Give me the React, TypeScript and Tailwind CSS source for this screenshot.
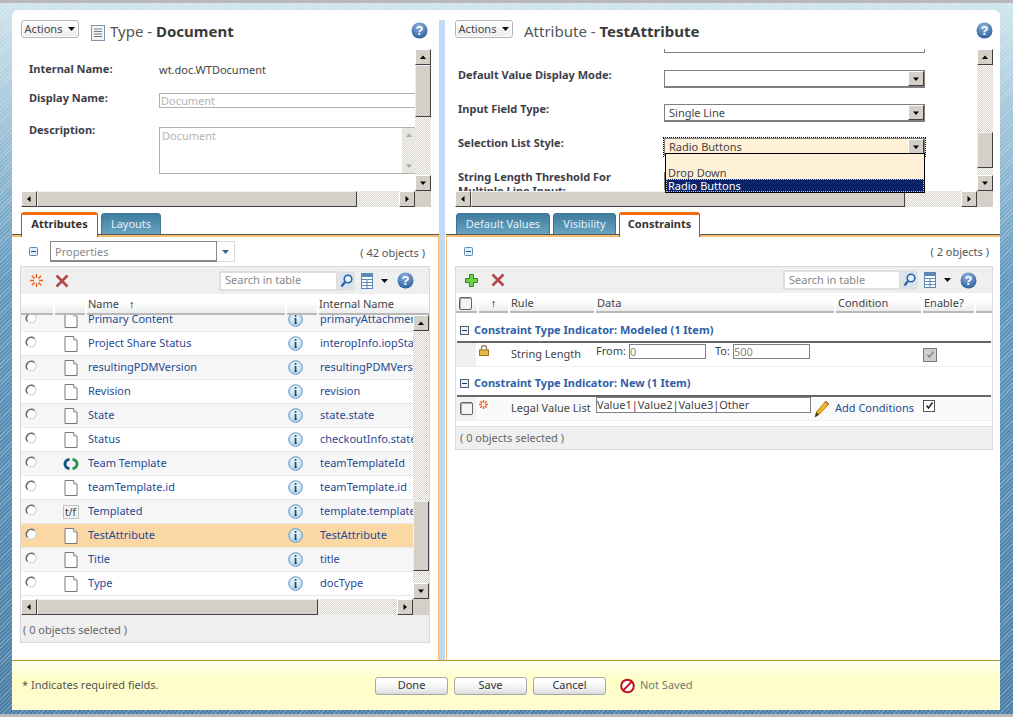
import React from "react";

const hatch =
  "bg-[repeating-conic-gradient(#d4d0c8_0_25%,#ffffff_0_50%)] bg-[length:2px_2px]";

function Arrow({ dir, faded }: { dir: "up" | "down" | "left" | "right"; faded?: boolean }) {
  const points = {
    up: "1,6 4,2.5 7,6",
    down: "1,2.5 4,6 7,2.5",
    left: "5.5,1 2,4 5.5,7",
    right: "2.5,1 6,4 2.5,7",
  }[dir];
  return (
    <svg width="8" height="8" viewBox="0 0 8 8">
      <polygon points={points} fill={faded ? "#a8a8a8" : "#000"} />
    </svg>
  );
}

function ScrollButton({ dir }: { dir: "up" | "down" | "left" | "right" }) {
  return (
    <div className="w-4 h-4 shrink-0 flex items-center justify-center bg-[#d4d0c8] border border-t-white border-l-white border-r-[#404040] border-b-[#404040]">
      <Arrow dir={dir} />
    </div>
  );
}

function Thumb({ className }: { className: string }) {
  return (
    <div className={`shrink-0 bg-[#d4d0c8] border border-t-[#efefef] border-l-[#efefef] border-r-[#404040] border-b-[#404040] ${className}`} />
  );
}

function VBar({ height, before, thumb }: { height: string; before: string; thumb: string }) {
  return (
    <div className={`w-4 shrink-0 flex flex-col ${height}`}>
      <ScrollButton dir="up" />
      <div className={`flex-1 flex flex-col ${hatch}`}>
        <div className={before} />
        <Thumb className={`w-4 ${thumb}`} />
      </div>
      <ScrollButton dir="down" />
    </div>
  );
}

function HBar({ width, thumb }: { width: string; thumb: string }) {
  return (
    <div className={`h-4 shrink-0 flex ${width}`}>
      <ScrollButton dir="left" />
      <div className={`flex-1 flex ${hatch}`}>
        <Thumb className={`h-4 ${thumb}`} />
      </div>
      <ScrollButton dir="right" />
    </div>
  );
}

function HelpIcon() {
  return (
    <svg width="17" height="17" viewBox="0 0 17 17">
      <defs>
        <radialGradient id="helpBall" cx="0.45" cy="0.25" r="0.85">
          <stop offset="0" stopColor="#8fb4dc" />
          <stop offset="1" stopColor="#1f5596" />
        </radialGradient>
      </defs>
      <circle cx="8.5" cy="8.5" r="8" fill="url(#helpBall)" />
      <text x="8.5" y="13" textAnchor="middle" fontSize="13" fontWeight="700" fill="#fff" fontFamily="Liberation Sans, sans-serif">?</text>
    </svg>
  );
}

function DocIcon() {
  return (
    <svg width="14" height="16" viewBox="0 0 14 16">
      <path d="M1 .5H9.5L13 4V15.5H1Z" fill="#fff" stroke="#77776f" />
      <path d="M9.5 .5V4H13" fill="#eee" stroke="#99998f" />
    </svg>
  );
}

function TypeDocIcon() {
  return (
    <svg width="14" height="16" viewBox="0 0 14 16">
      <rect x="0.5" y="0.5" width="13" height="15" fill="#f2f5fa" stroke="#7f93ad" />
      <path d="M3 4H11M3 6.5H11M3 9H11M3 11.5H11" stroke="#777" />
    </svg>
  );
}

function RadioIcon() {
  return (
    <svg width="12" height="12" viewBox="0 0 12 12">
      <circle cx="6" cy="6" r="5" fill="#fff" stroke="#ddd" strokeWidth="1.5" />
      <path d="M2.4 9.4A5 5 0 0 1 9.4 2.4" fill="none" stroke="#6f6f6f" strokeWidth="1.5" />
    </svg>
  );
}

function InfoIcon() {
  return (
    <svg width="15" height="15" viewBox="0 0 15 15">
      <defs>
        <radialGradient id="infoBall" cx="0.5" cy="0.4" r="0.6">
          <stop offset="0" stopColor="#ffffff" />
          <stop offset="1" stopColor="#a8d0ec" />
        </radialGradient>
      </defs>
      <circle cx="7.5" cy="7.5" r="6.8" fill="url(#infoBall)" stroke="#5f9cc4" />
      <text x="7.5" y="11.5" textAnchor="middle" fontSize="12" fontWeight="700" fill="#174a6e" fontFamily="Liberation Serif, serif">i</text>
    </svg>
  );
}

function TeamIcon() {
  return (
    <svg width="16" height="12" viewBox="0 0 16 12">
      <path d="M6.5 1.5A4.5 4.5 0 0 0 6.5 10.5" fill="none" stroke="#16557f" strokeWidth="3" />
      <path d="M9.5 1.5A4.5 4.5 0 0 1 9.5 10.5" fill="none" stroke="#1f9a4a" strokeWidth="3" />
    </svg>
  );
}

function TfIcon() {
  return (
    <div className="w-4 h-[14px] border border-[#c4c4c4] bg-[#f4f4ee] flex items-center justify-center text-[10px] leading-none text-[#333]">
      t/f
    </div>
  );
}

function SparkIcon({ small }: { small?: boolean }) {
  const size = small ? 9 : 13;
  return (
    <svg width={size} height={size} viewBox="0 0 13 13">
      <path
        d="M6.5 0V4M6.5 9V13M0 6.5H4M9 6.5H13M1.8 1.8L4.5 4.5M8.5 8.5L11.2 11.2M11.2 1.8L8.5 4.5M4.5 8.5L1.8 11.2"
        stroke="#ee5a18"
        strokeWidth={small ? 2 : 1.4}
      />
    </svg>
  );
}

function RemoveIcon() {
  return (
    <svg width="14" height="14" viewBox="0 0 14 14">
      <path d="M1.5 1.5L12.5 12.5M12.5 1.5L1.5 12.5" stroke="#b4474a" strokeWidth="2.6" />
    </svg>
  );
}

function PlusIcon() {
  return (
    <svg width="13" height="13" viewBox="0 0 13 13">
      <path d="M4.5 .5H8.5V4.5H12.5V8.5H8.5V12.5H4.5V8.5H.5V4.5H4.5Z" fill="#6fd04a" stroke="#2d8a22" />
    </svg>
  );
}

function MagnifierIcon() {
  return (
    <svg width="13" height="14" viewBox="0 0 13 14">
      <circle cx="8" cy="5" r="3.8" fill="#e8f1fb" stroke="#2a62a8" strokeWidth="1.6" />
      <path d="M5 8L1.5 12.5" stroke="#2a62a8" strokeWidth="2.2" />
    </svg>
  );
}

function ColumnsIcon() {
  return (
    <svg width="12" height="16" viewBox="0 0 12 16">
      <rect x="0.5" y="0.5" width="11" height="15" fill="#fff" stroke="#5d88b8" />
      <path d="M0 3.5H12M0 6.5H12M0 9.5H12M0 12.5H12M6 6.5V16" stroke="#5d88b8" />
      <rect x="1" y="1" width="10" height="2" fill="#5d88b8" />
    </svg>
  );
}

function Caret() {
  return (
    <svg width="7" height="4" viewBox="0 0 7 4">
      <polygon points="0,0 7,0 3.5,4" fill="#111" />
    </svg>
  );
}

function Collapse() {
  return (
    <svg width="9" height="9" viewBox="0 0 9 9">
      <rect x="0.5" y="0.5" width="8" height="8" rx="1" fill="#e4eef8" stroke="#5a8cb4" />
      <path d="M2 4.5H7" stroke="#234f78" />
    </svg>
  );
}

function GroupCollapse() {
  return (
    <svg width="9" height="9" viewBox="0 0 9 9">
      <rect x="0.5" y="0.5" width="8" height="8" fill="#eef2f6" stroke="#4a5e78" />
      <path d="M2 4.5H7" stroke="#1f3a5c" />
    </svg>
  );
}

function LockIcon() {
  return (
    <svg width="10" height="11" viewBox="0 0 10 11">
      <path d="M2.5 5V3A2.5 2.5 0 0 1 7.5 3V5" fill="none" stroke="#8a7a50" strokeWidth="1.3" />
      <rect x="0.5" y="5" width="9" height="5.5" fill="#e8b840" stroke="#9a7420" />
    </svg>
  );
}

function PencilIcon() {
  return (
    <svg width="16" height="18" viewBox="0 0 16 18">
      <path d="M12 1L15 4L5 14.5L1 17L2.5 12Z" fill="#f0b820" stroke="#b08010" />
      <path d="M1 17L2.5 12L5 14.5Z" fill="#4a3a20" />
      <path d="M12 1L15 4L13.5 5.5L10.5 2.5Z" fill="#d88070" />
    </svg>
  );
}

function NoIcon() {
  return (
    <svg width="15" height="16" viewBox="0 0 15 16">
      <circle cx="7.5" cy="8" r="6.3" fill="#fff" stroke="#c00f20" strokeWidth="2" />
      <path d="M3.2 12.4L11.8 3.6" stroke="#c00f20" strokeWidth="2" />
    </svg>
  );
}

function ActionsButton() {
  return (
    <div className="w-[58px] h-[18px] flex items-center justify-center gap-[6px] rounded-[3px] border border-[#b4b4b4] bg-[linear-gradient(#ffffff,#ececec)] shadow-[inset_0_0_0_1px_#fff] text-[11px] text-[#444]">
      <span>Actions</span>
      <Caret />
    </div>
  );
}

function Tab({ label, active, className }: { label: string; active?: boolean; className: string }) {
  if (active) {
    return (
      <div className={`h-[25px] -mb-[2px] pb-[3px] flex items-center justify-center rounded-t-[3px] border-x border-[#666] border-t-[3px] border-t-[#f06a10] bg-white font-bold text-[11px] text-[#333] relative z-10 ${className}`}>
        {label}
      </div>
    );
  }
  return (
    <div className={`h-[22px] flex items-center justify-center rounded-t-[3px] border border-[#3f7590] bg-[linear-gradient(#3f7c9f,#68a4c0)] text-[11px] text-[#e4eff5] ${className}`}>
      {label}
    </div>
  );
}

function TabLine() {
  return <div className="h-[3px] border-t border-[#555] bg-[#f2c070] -mt-px" />;
}

function SearchTools({ width }: { width: string }) {
  return (
    <div className="flex items-center">
      <div className={`h-[20px] bg-white border-2 border-[#dedede] pl-1 flex items-center text-[11px] text-[#888] ${width}`}>
        Search in table
      </div>
      <div className="w-[17px] h-[20px] bg-[#dbe2ea] flex items-center justify-center border border-[#e6e6e6]">
        <MagnifierIcon />
      </div>
      <div className="ml-[6px]">
        <ColumnsIcon />
      </div>
      <div className="ml-[8px]">
        <Caret />
      </div>
      <div className="ml-[9px]">
        <HelpIcon />
      </div>
    </div>
  );
}

const rows = [
  { name: "Project Share Status", internal: "interopInfo.iopSta", icon: "doc", bg: "bg-white" },
  { name: "resultingPDMVersion", internal: "resultingPDMVers", icon: "doc", bg: "bg-[#f6f6f6]" },
  { name: "Revision", internal: "revision", icon: "doc", bg: "bg-white" },
  { name: "State", internal: "state.state", icon: "doc", bg: "bg-[#f6f6f6]" },
  { name: "Status", internal: "checkoutInfo.state", icon: "doc", bg: "bg-white" },
  { name: "Team Template", internal: "teamTemplateId", icon: "team", bg: "bg-[#f6f6f6]" },
  { name: "teamTemplate.id", internal: "teamTemplate.id", icon: "doc", bg: "bg-white" },
  { name: "Templated", internal: "template.template", icon: "tf", bg: "bg-[#f6f6f6]" },
  { name: "TestAttribute", internal: "TestAttribute", icon: "doc", bg: "bg-[#fbd7a4]" },
  { name: "Title", internal: "title", icon: "doc", bg: "bg-[#f6f6f6]" },
  { name: "Type", internal: "docType", icon: "doc", bg: "bg-white" },
];

function AttrCells({ name, internal, icon }: { name: string; internal: string; icon: string }) {
  return (
    <div className="h-[23px] shrink-0 flex items-center text-[11px] text-[#1f4a94]">
      <div className="w-[32px] pl-[4px] -mt-1 shrink-0">
        <RadioIcon />
      </div>
      <div className="w-[35px] shrink-0 flex justify-center">
        {icon === "doc" && <DocIcon />}
        {icon === "team" && <TeamIcon />}
        {icon === "tf" && <TfIcon />}
      </div>
      <div className="w-[200px] shrink-0">{name}</div>
      <div className="w-[32px] shrink-0 flex justify-start">
        <InfoIcon />
      </div>
      <div className="whitespace-nowrap w-[93px]">{internal}</div>
    </div>
  );
}

function HeadCell({ className, children }: { className: string; children?: React.ReactNode }) {
  return (
    <div className={`h-full pt-[2px] flex items-center shrink-0 border-b-2 border-[#b8b8b8] bg-[linear-gradient(#ffffff_40%,#ececec)] text-[11px] text-[#444] ${className}`}>
      {children}
    </div>
  );
}

function SelectBox({ value, className }: { value?: string; className: string }) {
  return (
    <div className={`w-[261px] h-[18px] border border-[#808080] border-b-2 flex items-center justify-between text-[11px] font-normal text-[#444] pl-1 ${className}`}>
      <span className="mt-[1px]">{value}</span>
      <div className="w-4 h-[15px] flex items-center justify-center bg-[#d4d0c8] border border-t-white border-l-white border-r-[#404040] border-b-[#404040]">
        <Arrow dir="down" />
      </div>
    </div>
  );
}

function FooterButton({ label }: { label: string }) {
  return (
    <div className="w-[73px] h-[18px] rounded-[3px] border border-[#a8a8a8] bg-[linear-gradient(#ffffff_20%,#ececec_75%,#d8d8d8)] flex items-center justify-center text-[11px] text-[#333]">
      {label}
    </div>
  );
}

function Checkbox() {
  return (
    <div className="w-[13px] h-[13px] rounded-[2px] border border-[#666] bg-[#f4f4f4] shadow-[inset_1px_1px_0_#aaa]" />
  );
}

function CheckMark({ disabled }: { disabled?: boolean }) {
  return (
    <div className={`flex items-center justify-center border ${disabled ? "w-[14px] h-[14px] border-[#777] bg-[#cfcfcf]" : "w-[12px] h-[12px] border-[#555] bg-white"}`}>
      <svg width="9" height="9" viewBox="0 0 9 9">
        <path d="M1.5 4.5L3.5 7L7.5 1.5" fill="none" stroke={disabled ? "#888" : "#222"} strokeWidth="1.4" />
      </svg>
    </div>
  );
}

function LeftPane() {
  return (
    <div className="w-[427px] shrink-0 flex flex-col">
      <div className="h-[39px] pl-[9px] pr-[11px] pt-[10px] flex items-start">
        <ActionsButton />
        <div className="ml-[12px] mt-[5px]">
          <TypeDocIcon />
        </div>
        <div className="ml-[5px] -mt-[1px] text-[15px] leading-[24px] text-[#555]">
          Type - <span className="font-bold text-[#3a3a3a]">Document</span>
        </div>
        <div className="ml-auto mt-[2px]">
          <HelpIcon />
        </div>
      </div>
      <div className="ml-[9px] w-[410px] h-[158px] flex flex-wrap">
        <div className="w-[394px] h-[142px] overflow-hidden flex flex-col pl-[8px] text-[11px]">
          <div className="flex mt-[12px] h-[32px] shrink-0">
            <div className="w-[130px] font-bold text-[#3e3e4a]">Internal Name:</div>
            <div className="text-[#444] mt-[1px]">wt.doc.WTDocument</div>
          </div>
          <div className="flex h-[38px] shrink-0">
            <div className="w-[130px] font-bold text-[#3e3e4a] -mt-[3px]">Display Name:</div>
            <div className="flex-1 h-[15px] border border-r-0 border-[#b0b0b0] text-[#b4b4b4] leading-[14px] pl-[1px]">Document</div>
          </div>
          <div className="flex h-[68px] shrink-0">
            <div className="w-[130px] font-bold text-[#3e3e4a] -mt-[9px]">Description:</div>
            <div className="flex-1 h-[47px] -mt-[4px] flex border border-r-0 border-[#b0b0b0] text-[#b4b4b4]">
              <div className="flex-1 pl-[2px] leading-[14px] pt-[1px]">Document</div>
              <div className="w-[13px] flex flex-col">
                <div className="h-[14px] flex items-center justify-center bg-[#e8e6e0]">
                  <Arrow dir="up" faded />
                </div>
                <div className={`flex-1 ${hatch}`} />
                <div className="h-[14px] flex items-center justify-center bg-[#e8e6e0]">
                  <Arrow dir="down" faded />
                </div>
              </div>
            </div>
          </div>
          <div className="ml-[130px] h-2 shrink-0 border-t border-[#666]" />
        </div>
        <VBar height="h-[142px]" before="h-0" thumb="h-[52px]" />
        <HBar width="w-[394px]" thumb="w-[320px]" />
        <div className="w-4 h-4 bg-[#d4d0c8]" />
      </div>
      <div className="h-[5px]" />
      <div className="flex pl-[9px] gap-[3px] items-end h-[23px]">
        <Tab label="Attributes" active className="w-[77px]" />
        <Tab label="Layouts" className="w-[60px]" />
      </div>
      <TabLine />
      <div className="flex-1 flex flex-col border-r border-[#f2c070] pl-[8px]">
        <div className="h-[29px] flex items-center shrink-0">
          <div className="ml-[9px]">
            <Collapse />
          </div>
          <div className="ml-[12px] w-[167px] h-[21px] pt-[3px] border border-[#888] border-b-2 flex items-center text-[11px] text-[#888] pl-1">
            Properties
          </div>
          <div className="w-[18px] h-[21px] border border-l-0 border-[#dadada] flex items-center justify-center">
            <svg width="7" height="4" viewBox="0 0 7 4">
              <polygon points="0,0 7,0 3.5,4" fill="#2f6a92" />
            </svg>
          </div>
          <div className="ml-auto mr-[13px] pt-[3px] text-[11px] text-[#555]">( 42 objects )</div>
        </div>
        <div className="w-[410px] h-[377px] border border-[#d8d8d8] flex flex-col">
          <div className="h-[27px] shrink-0 bg-[#efefef] flex items-center pl-[9px] pr-[15px]">
            <SparkIcon />
            <div className="ml-[12px]">
              <RemoveIcon />
            </div>
            <div className="ml-auto">
              <SearchTools width="w-[119px]" />
            </div>
          </div>
          <div className="h-[21px] shrink-0 flex gap-[2px]">
            <HeadCell className="w-[32px]" />
            <HeadCell className="w-[30px]" />
            <HeadCell className="w-[198px] pl-[1px] gap-[10px] bg-[linear-gradient(#ffffff,#e4e4e4)]">
              Name
              <span className="text-[#111]">↑</span>
            </HeadCell>
            <HeadCell className="w-[30px]" />
            <HeadCell className="flex-1">Internal Name</HeadCell>
          </div>
          <div className="h-[284px] shrink-0 flex">
            <div className="w-[392px] shrink-0 flex flex-col overflow-hidden">
              <div className="h-[17px] shrink-0 flex flex-col justify-end overflow-hidden bg-[#f6f6f6] border-b border-[#e8e8e8]">
                <AttrCells name="Primary Content" internal="primaryAttachmen" icon="doc" />
              </div>
              {rows.map((row) => (
                <div key={row.name} className={`border-b border-[#e8e8e8] ${row.bg}`}>
                  <AttrCells name={row.name} internal={row.internal} icon={row.icon} />
                </div>
              ))}
            </div>
            <VBar height="h-[284px]" before="h-[170px]" thumb="h-[70px]" />
          </div>
          <div className="h-[16px] shrink-0 flex">
            <HBar width="w-[392px]" thumb="w-[281px]" />
            <div className="flex-1 bg-[#d4d0c8]" />
          </div>
          <div className="flex-1 bg-[#efefef] flex items-center pl-[2px] pt-[3px] text-[11px] text-[#666]">
            ( 0 objects selected )
          </div>
        </div>
      </div>
    </div>
  );
}

function RightPane() {
  return (
    <div className="flex-1 ml-px flex flex-col relative">
      <div className="h-[39px] pl-[9px] pr-[7px] pt-[10px] flex items-start">
        <ActionsButton />
        <div className="ml-[11px] -mt-[1px] text-[15px] leading-[24px] text-[#555]">
          Attribute - <span className="font-bold text-[#3a3a3a]">TestAttribute</span>
        </div>
        <div className="ml-auto mt-[2px]">
          <HelpIcon />
        </div>
      </div>
      <div className="ml-[9px] w-[538px] h-[158px] flex flex-wrap">
        <div className="w-[522px] h-[142px] overflow-hidden flex flex-col pl-[3px] text-[11px] font-bold text-[#3e3e4a]">
          <div className="ml-[206px] h-[4px] w-[261px] border-b border-x border-[#808080] shrink-0" />
          <div className="flex h-[34px] pt-[17px] shrink-0">
            <div className="w-[206px] leading-[16px] -mt-[3px]">Default Value Display Mode:</div>
            <SelectBox className="bg-white" />
          </div>
          <div className="flex h-[34px] pt-[17px] shrink-0">
            <div className="w-[206px] leading-[16px] -mt-[3px]">Input Field Type:</div>
            <SelectBox value="Single Line" className="bg-white" />
          </div>
          <div className="flex h-[34px] pt-[17px] shrink-0">
            <div className="w-[206px] leading-[16px] -mt-[3px]">Selection List Style:</div>
            <SelectBox value="Radio Buttons" className="bg-[#fff0d8] outline-dotted outline-1 outline-black" />
          </div>
          <div className="flex pt-[17px] shrink-0">
            <div className="w-[206px] pr-[24px] leading-[14px] -mt-[2px]">
              String Length Threshold For Multiple Line Input:
            </div>
            <div className="w-[261px] h-[18px] border border-[#808080]" />
          </div>
        </div>
        <VBar height="h-[142px]" before="h-[67px]" thumb="h-[36px]" />
        <HBar width="w-[522px]" thumb="w-[434px]" />
        <div className="w-4 h-4 bg-[#d4d0c8]" />
      </div>
      {/* open list of the Selection List Style select */}
      <div className="absolute left-[219px] top-[143px] w-[260px] h-[40px] border border-black bg-[#fff0d8] flex flex-col justify-end text-[11px] leading-[13px] text-[#444] z-20">
        <div className="pl-[2px]">Drop Down</div>
        <div className="pl-[2px] bg-[#0a246a] text-white outline-dotted outline-1 -outline-offset-1 outline-[#f0c080]">Radio Buttons</div>
      </div>
      <div className="h-[5px]" />
      <div className="flex pl-[10px] gap-[3px] items-end h-[23px]">
        <Tab label="Default Values" className="w-[94px]" />
        <Tab label="Visibility" className="w-[63px]" />
        <Tab label="Constraints" active className="w-[81px]" />
      </div>
      <TabLine />
      <div className="flex-1 flex flex-col border-l border-[#f2c070] pl-[8px] pr-[7px]">
        <div className="h-[29px] flex items-center shrink-0">
          <div className="ml-[9px]">
            <Collapse />
          </div>
          <div className="ml-auto mr-[4px] pt-[2px] text-[11px] text-[#555]">( 2 objects )</div>
        </div>
        <div className="w-[538px] h-[184px] border border-[#d8d8d8] flex flex-col text-[11px]">
          <div className="h-[26px] shrink-0 bg-[#efefef] flex items-center pl-[9px] pr-[15px]">
            <PlusIcon />
            <div className="ml-[13px]">
              <RemoveIcon />
            </div>
            <div className="ml-auto">
              <SearchTools width="w-[118px]" />
            </div>
          </div>
          <div className="h-[20px] shrink-0 flex gap-[2px]">
            <HeadCell className="w-[21px] pl-[3px]">
              <Checkbox />
            </HeadCell>
            <HeadCell className="w-[29px] justify-center">
              <span className="text-[#111]">↑</span>
            </HeadCell>
            <HeadCell className="w-[84px] pl-[1px]">Rule</HeadCell>
            <HeadCell className="w-[238px] pl-[1px]">Data</HeadCell>
            <HeadCell className="w-[85px] pl-[2px]">Condition</HeadCell>
            <HeadCell className="w-[51px] pl-[1px]">Enable?</HeadCell>
            <HeadCell className="w-[16px]" />
          </div>
          <div className="h-[28px] shrink-0 flex items-end pl-[4px] pb-[3px] gap-[5px] font-bold text-[#2f5fa8]">
            <div className="mb-[3px]">
              <GroupCollapse />
            </div>
            Constraint Type Indicator: Modeled (1 Item)
          </div>
          <div className="mx-px h-[2px] shrink-0 bg-[#666] w-[534px]" />
          <div className="h-[24px] shrink-0 flex items-center text-[#444] border-b border-[#eee] w-[536px]">
            <div className="w-[20px] h-full bg-[#f0f0f0] shrink-0" />
            <div className="w-[35px] shrink-0 pl-[3px] -mt-[8px]">
              <LockIcon />
            </div>
            <div className="w-[85px] shrink-0">String Length</div>
            <div className="w-[327px] shrink-0 flex items-center -mt-[7px]">
              <span>From:</span>
              <div className="ml-[3px] w-[77px] h-[15px] border border-[#808080] text-[#888] leading-[13px]">0</div>
              <span className="ml-[9px]">To:</span>
              <div className="ml-[3px] w-[77px] h-[15px] border border-[#808080] text-[#888] leading-[13px]">500</div>
            </div>
            <CheckMark disabled />
          </div>
          <div className="h-[28px] shrink-0 flex items-end pl-[4px] pb-[4px] gap-[5px] font-bold text-[#2f5fa8]">
            <div className="mb-[3px]">
              <GroupCollapse />
            </div>
            Constraint Type Indicator: New (1 Item)
          </div>
          <div className="mx-px h-[2px] shrink-0 bg-[#666] w-[534px]" />
          <div className="h-[24px] shrink-0 flex items-center text-[#444] border-b border-[#eee] bg-[#fafafa] w-[536px]">
            <div className="w-[20px] h-full bg-[#f0f0f0] shrink-0 flex items-center pl-[4px]">
              <Checkbox />
            </div>
            <div className="w-[35px] shrink-0 pl-[3px] -mt-[8px]">
              <SparkIcon small />
            </div>
            <div className="w-[85px] shrink-0 -mt-[1px] whitespace-nowrap">Legal Value List</div>
            <div className="w-[215px] h-[16px] border border-[#808080] bg-white leading-[14px] -mt-[8px] shrink-0">
              Value1|Value2|Value3|Other
            </div>
            <div className="ml-[3px] shrink-0">
              <PencilIcon />
            </div>
            <div className="ml-[5px] w-[88px] shrink-0 text-[#1f4a94] whitespace-nowrap -mt-[1px]">Add Conditions</div>
            <div className="-mt-[6px]">
              <CheckMark />
            </div>
          </div>
          <div className="mt-[5px] flex-1 bg-[#efefef] border-t border-[#e0e0e0] flex items-center pl-[4px] text-[#666]">
            ( 0 objects selected )
          </div>
        </div>
      </div>
    </div>
  );
}

export default function App() {
  return (
    <div className="w-[1013px] h-[717px] overflow-hidden flex flex-col font-['Noto_Sans',sans-serif] border-t-[3px] border-t-[#b8b8b8] border-b-[3px] border-b-[#b8b8b8] bg-[repeating-linear-gradient(135deg,rgba(255,255,255,0.25)_0,rgba(255,255,255,0.25)_1px,transparent_1px,transparent_3px),linear-gradient(#cfe4ec,#5f97bd_40%,#4a7ea6)]">
      <div className="flex-1 flex flex-col pt-[7px] pl-[12px] pr-[13px] pb-[4px] min-h-0">
        <div className="flex-1 flex flex-col bg-white rounded-t-[6px] overflow-hidden min-h-0">
          <div className="flex-1 flex min-h-0">
            <LeftPane />
            <div className="w-[6px] shrink-0 mt-[10px] bg-[#c2d8f6]" />
            <RightPane />
          </div>
          <div className="h-[50px] shrink-0 border-t border-[#a89a30] bg-[linear-gradient(#fffff0,#ffffc8_40%,#fffcd0)] flex items-center pl-[10px] text-[11px]">
            <div className="w-[353px] text-[#555]">* Indicates required fields.</div>
            <div className="flex gap-[6px]">
              <FooterButton label="Done" />
              <FooterButton label="Save" />
              <FooterButton label="Cancel" />
            </div>
            <div className="ml-[14px]">
              <NoIcon />
            </div>
            <div className="ml-[5px] text-[#777]">Not Saved</div>
          </div>
        </div>
      </div>
    </div>
  );
}
